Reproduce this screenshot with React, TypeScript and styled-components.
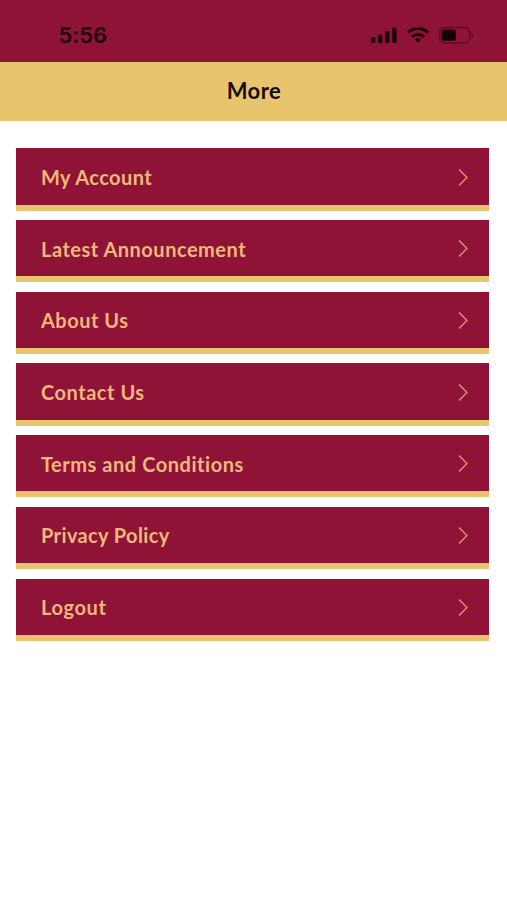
import React from "react";
import styled, { createGlobalStyle } from "styled-components";

const maroon = "#8f1336";
const gold = "#e8c46f";

const GlobalStyle = createGlobalStyle`
  *, *::before, *::after { box-sizing: border-box; }
  body { margin: 0; background: #fff; font-family: Lato, "Open Sans", sans-serif; }
`;

const Screen = styled.div`
  display: flex;
  flex-direction: column;
  min-height: 900px;
  background: #fff;
`;

const StatusBar = styled.header`
  display: flex;
  align-items: center;
  justify-content: space-between;
  height: 62px;
  padding: 8px 33px 0 58.5px;
  background: ${maroon};
  color: #1d020b;
`;

const Clock = styled.time`
  font: 600 22px/26px Inter, sans-serif;
  letter-spacing: -0.1px;
`;

const StatusIcons = styled.svg`
  display: block;
  width: 104px;
  height: 20px;
`;

const TitleBar = styled.div`
  display: flex;
  align-items: center;
  justify-content: center;
  height: 59px;
  padding: 0 0 1px 1px;
  background: ${gold};
`;

const Title = styled.h1`
  margin: 0;
  font-size: 22px;
  line-height: 28px;
  font-weight: 700;
  letter-spacing: 0.5px;
  color: #160d08;
`;

const Menu = styled.nav`
  display: flex;
  flex-direction: column;
  gap: 9.4px;
  padding: 27.4px 17.7px 0 16.4px;
`;

const MenuItem = styled.a`
  display: flex;
  align-items: center;
  justify-content: space-between;
  height: 62.3px;
  padding: 1px 20px 0 24.6px;
  border-bottom: 6px solid ${gold};
  background: ${maroon};
  color: #f1b77c;
  text-decoration: none;
`;

const Label = styled.span<{ $spacing: number }>`
  font-size: 20px;
  line-height: 26px;
  font-weight: 700;
  font-variant-ligatures: none;
  letter-spacing: ${(p) => p.$spacing}px;
  white-space: nowrap;
`;

const Chevron = styled.svg`
  display: block;
  width: 12px;
  height: 19px;
`;

const items = [
  { label: "My Account", spacing: 0.43 },
  { label: "Latest Announcement", spacing: 0.51 },
  { label: "About Us", spacing: 0.5 },
  { label: "Contact Us", spacing: 0.53 },
  { label: "Terms and Conditions", spacing: 0.54 },
  { label: "Privacy Policy", spacing: 0.38 },
  { label: "Logout", spacing: 0.6 },
];

export default function App() {
  return (
    <Screen>
      <GlobalStyle />
      <StatusBar>
        <Clock>5:56</Clock>
        <StatusIcons viewBox="0 0 104 20" aria-hidden="true">
          <g fill="#1d020b">
            <rect x="1" y="12.5" width="4.4" height="5.5" rx="1.3" />
            <rect x="8" y="9.6" width="4.4" height="8.4" rx="1.3" />
            <rect x="15" y="6" width="4.4" height="12" rx="1.3" />
            <rect x="22.2" y="2.4" width="4.4" height="15.6" rx="1.3" />
          </g>
          <g fill="none" stroke="#1d020b" strokeWidth="3">
            <path d="M38 7.7a14.2 14.2 0 0 1 20 0" />
            <path d="M42 11.9a8.5 8.5 0 0 1 12 0" />
          </g>
          <path d="M44.9 14.6a4.4 4.4 0 0 1 6.2 0L48 17.8z" fill="#1d020b" />
          <rect x="69.6" y="2.5" width="30" height="15.4" rx="4.4" fill="none" stroke="#5b0a24" strokeWidth="1.3" />
          <rect x="71.6" y="4.6" width="14.4" height="11.2" rx="2.2" fill="#160108" />
          <path d="M101.3 7.7q2 .6 2 2.5t-2 2.5z" fill="#5b0a24" />
        </StatusIcons>
      </StatusBar>
      <TitleBar>
        <Title>More</Title>
      </TitleBar>
      <Menu>
        {items.map(({ label, spacing }) => (
          <MenuItem key={label}>
            <Label $spacing={spacing}>{label}</Label>
            <Chevron viewBox="0 0 12 19" aria-hidden="true">
              <path d="M2 1.5 10 9.5 2 17.5" fill="none" stroke="#e9916a" strokeWidth="1.4" />
            </Chevron>
          </MenuItem>
        ))}
      </Menu>
    </Screen>
  );
}
